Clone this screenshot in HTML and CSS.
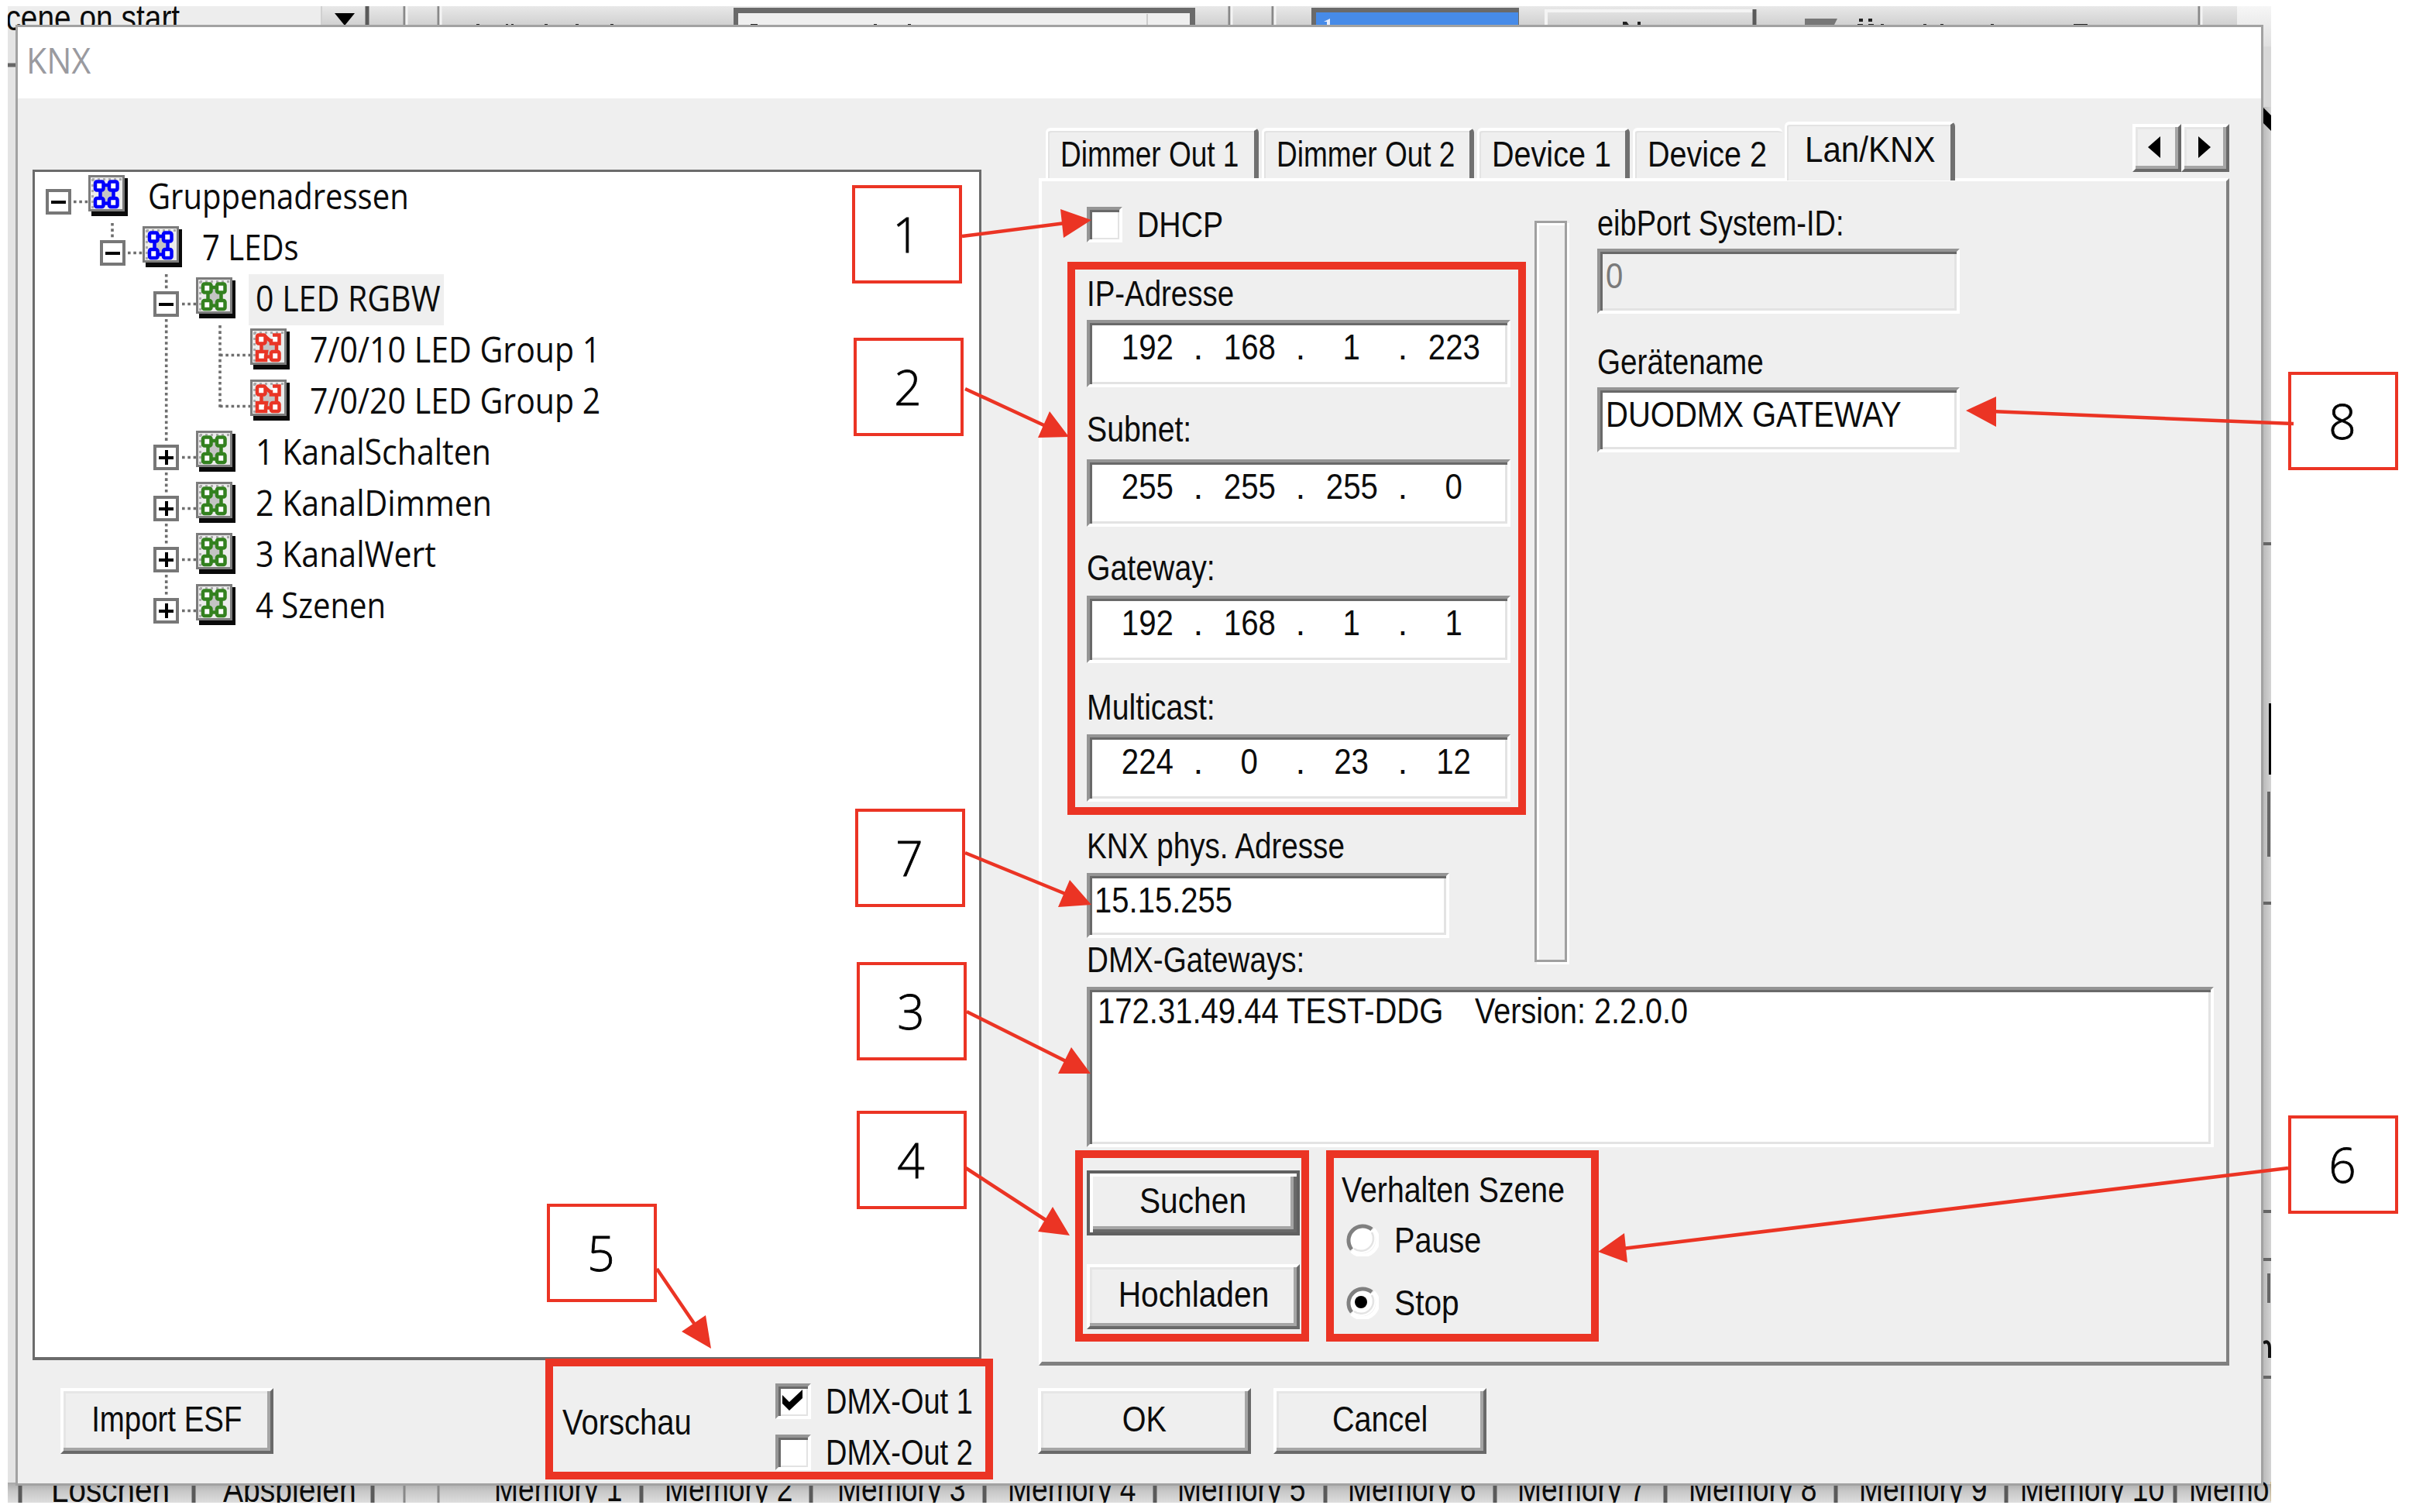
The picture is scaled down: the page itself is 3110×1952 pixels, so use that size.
FILE: index.html
```
<!DOCTYPE html>
<html lang="de">
<head>
<meta charset="utf-8">
<title>KNX</title>
<link rel="stylesheet" href="styles.css">
</head>
<body>
<main class="stage">

  <!-- Main window that shows around the edges of the dialog -->
  <svg class="backdrop" width="2922" height="1932" viewBox="10 8 2922 1932">
    <defs>
      <linearGradient id="topShade" x1="0" y1="0" x2="0" y2="1"><stop offset="0" stop-color="#e8e8e8"/><stop offset="1" stop-color="#cfcfcf"/></linearGradient>
      <linearGradient id="lowShade" x1="0" y1="0" x2="0" y2="1"><stop offset="0" stop-color="#a8a8a8"/><stop offset=".4" stop-color="#c6c6c6"/><stop offset="1" stop-color="#dedede"/></linearGradient>
      <linearGradient id="sideShade" x1="0" y1="0" x2="1" y2="0"><stop offset="0" stop-color="#b0b0b0"/><stop offset="1" stop-color="#d4d4d4"/></linearGradient>
      <linearGradient id="cornerShade" x1="0" y1="0" x2="0" y2="1"><stop offset="0" stop-color="#f6f6f6"/><stop offset="1" stop-color="#dcdcdc"/></linearGradient>
    </defs>
    <rect x="10" y="8" width="2922" height="1932" fill="#e4e4e4"/>
    <rect x="10" y="8" width="2880" height="26" fill="url(#topShade)"/>
    <rect x="10" y="8" width="405" height="26" fill="#ededed"/>
    <rect x="10" y="1914" width="2922" height="26" fill="url(#lowShade)"/>
    <rect x="2918" y="110" width="14" height="1806" fill="url(#sideShade)"/>
    <rect x="2888" y="8" width="44" height="60" fill="url(#cornerShade)"/>
    <rect x="2922" y="60" width="10" height="78" fill="#d8d8d8"/>

    <text class="ms" transform="translate(-12 39) scale(.845 1)" x="0" y="0">scene on start</text>
    <path d="M432 17h26l-13 16z" fill="#000"/>
    <path d="M415 8v26" stroke="#d0d0d0" stroke-width="2"/>
    <path d="M474 8v26" stroke="#5a5a5a" stroke-width="5"/>
    <path d="M522 8v26M566 8v26M1587 8v26M1643 8v26M2839 8v26" stroke="#888" stroke-width="3"/>
    <path d="M525 8v26M569 8v26M1590 8v26M1646 8v26M2842 8v26" stroke="#f4f4f4" stroke-width="3"/>
    <rect x="947" y="10" width="596" height="30" fill="#6a6a6a"/>
    <rect x="953" y="17" width="583" height="20" fill="#efefef"/>
    <path d="M1481 18v16" stroke="#ccc" stroke-width="2"/>
    <g fill="#222">
      <path d="M615 31h4v4h-4zM653 31h3v4h-3zM660 31h3v4h-3zM703 31h4v4h-4zM743 31h4v4h-4zM788 31h4v4h-4z"/>
      <path d="M969 31h9v4h-9zM1128 31h4v4h-4zM1172 31h4v4h-4z"/>
      <path d="M2483 31h4v4h-4zM2505 31h4v4h-4zM2570 31h4v4h-4zM2677 31h18v4h-18z"/>
      <path d="M2400 24h5v4h-5zM2412 24h5v4h-5zM2398 31h7v4h-7zM2412 31h7v4h-7zM2428 31h4v4h-4z"/>
      <path d="M2095 28h5l5 7h-10zM2114 28h4v7h-4z"/>
    </g>
    <rect x="1693" y="10" width="268" height="24" fill="#6a6a6a"/>
    <rect x="1699" y="16" width="261" height="18" fill="#478be8"/>
    <path d="M1709 28l8-4v10h-4v-6z" fill="#e8eefc"/>
    <path d="M1996 40V14h268" fill="none" stroke="#f4f4f4" stroke-width="4"/>
    <path d="M2265 12v22" stroke="#5a5a5a" stroke-width="5"/>
    <path d="M2330 24h42l-4 8h-38z" fill="#777"/>

    <g stroke="#5a5a5a" stroke-width="5">
      <path d="M26 1917v23M250 1917v23M481 1917v23M828 1917v23M1047 1917v23M1271 1917v23M1491 1917v23M1711 1917v23M1930 1917v23M2150 1917v23M2370 1917v23M2590 1917v23M2808 1917v23"/>
    </g>
    <path d="M522 1917v23M566 1917v23" stroke="#888" stroke-width="3"/>
    <g class="ms">
      <text transform="translate(66 1939) scale(.88 1)">Löschen</text>
      <text transform="translate(288 1939) scale(.85 1)">Abspielen</text>
      <text transform="translate(638 1938) scale(.81 1)">Memory 1</text>
      <text transform="translate(858 1938) scale(.81 1)">Memory 2</text>
      <text transform="translate(1081 1938) scale(.81 1)">Memory 3</text>
      <text transform="translate(1301 1938) scale(.81 1)">Memory 4</text>
      <text transform="translate(1520 1938) scale(.81 1)">Memory 5</text>
      <text transform="translate(1740 1938) scale(.81 1)">Memory 6</text>
      <text transform="translate(1959 1938) scale(.81 1)">Memory 7</text>
      <text transform="translate(2180 1938) scale(.81 1)">Memory 8</text>
      <text transform="translate(2400 1938) scale(.81 1)">Memory 9</text>
      <text transform="translate(2608 1938) scale(.81 1)">Memory 10</text>
      <text transform="translate(2826 1938) scale(.81 1)">Memory 11</text>
    </g>

    <path d="M10 84h12" stroke="#666" stroke-width="5"/>
    <path d="M2918 135l14 14v20l-14-14z" fill="#000"/>
    <path d="M2920 55v42" stroke="#666" stroke-width="4"/>
    <path d="M2931 908v92" stroke="#000" stroke-width="4"/>
    <path d="M2920 702h12M2920 1166h12M2920 1564h12M2920 1626h12M2920 1778h12" stroke="#666" stroke-width="4"/>
    <path d="M2929 1022v84M2929 1644v38" stroke="#666" stroke-width="4"/>
    <path d="M2922 1734c5-4 8 0 8 6v13" fill="none" stroke="#111" stroke-width="4"/>
  </svg>

  <section class="dialog">
    <header class="titlebar"><span class="seg seg-title">KNX</span></header>
    <div class="body">

      <div class="left">
        <div class="tree">
          <svg class="lines" width="340" height="600" viewBox="45 222 340 600">
            <g fill="none" stroke="#6e6e6e" stroke-width="3.6" stroke-dasharray="3.6 3.7">
              <path d="M95 260.5h19M165 326.5h19M235 392.5h19M284 458.500h40M284 524.500h40M235 590.500h19M235 656.500h19M235 722.500h19M235 788.500h19"/>
              <path d="M145 288v20M214.700 354v20M214.700 412v158M214.700 610v26M214.700 676v26M214.700 742v26M284 420v106"/>
            </g>
          </svg>
          <div class="row d0"><i class="box minus"></i><svg class="ico blue"><use href="#grp"/></svg><span class="name"><b class="seg">Gruppenadressen</b></span></div>
          <div class="row d1"><i class="box minus"></i><svg class="ico blue"><use href="#grp"/></svg><span class="name"><b class="seg">7 LEDs</b></span></div>
          <div class="row d2"><i class="box minus"></i><svg class="ico green"><use href="#grp"/></svg><span class="name selected"><b class="seg wide">0 LED RGBW</b></span></div>
          <div class="row d3"><i class="box none"></i><svg class="ico red"><use href="#adr"/></svg><span class="name"><b class="seg wide">7/0/10 LED Group 1</b></span></div>
          <div class="row d3"><i class="box none"></i><svg class="ico red"><use href="#adr"/></svg><span class="name"><b class="seg wide">7/0/20 LED Group 2</b></span></div>
          <div class="row d2"><i class="box plus"></i><svg class="ico green"><use href="#grp"/></svg><span class="name"><b class="seg wide">1 KanalSchalten</b></span></div>
          <div class="row d2"><i class="box plus"></i><svg class="ico green"><use href="#grp"/></svg><span class="name"><b class="seg wide">2 KanalDimmen</b></span></div>
          <div class="row d2"><i class="box plus"></i><svg class="ico green"><use href="#grp"/></svg><span class="name"><b class="seg wide">3 KanalWert</b></span></div>
          <div class="row d2"><i class="box plus"></i><svg class="ico green"><use href="#grp"/></svg><span class="name"><b class="seg">4 Szenen</b></span></div>
        </div>
        <div class="left-foot">
          <div class="btn import"><span class="t x83">Import ESF</span></div>
          <div class="preview-label"><span class="t x87">Vorschau</span></div>
          <div class="previews">
            <div class="check-row"><i class="check"><svg viewBox="0 0 38 38"><path d="M5 11l9 9 17-16v11L14 31 5 22z"/></svg></i><span class="t x82">DMX-Out 1</span></div>
            <div class="check-row"><i class="check"></i><span class="t x82">DMX-Out 2</span></div>
          </div>
        </div>
      </div>

      <div class="right">
        <div class="tabs">
          <div class="tab tab-a"><span class="t x80">Dimmer Out 1</span></div>
          <div class="tab tab-b"><span class="t x80">Dimmer Out 2</span></div>
          <div class="tab tab-c"><span class="t">Device 1</span></div>
          <div class="tab tab-d"><span class="t">Device 2</span></div>
          <div class="tab active"><span class="t x91">Lan/KNX</span></div>
          <div class="spin">
            <i class="btn arrow"><svg viewBox="0 0 16 28"><path d="M16 0v28L0 14z"/></svg></i>
            <i class="btn arrow"><svg viewBox="0 0 16 28"><path d="M0 0v28l16-14z"/></svg></i>
          </div>
        </div>
        <div class="panel">
          <div class="fields">
            <div class="net">
              <div class="check-row dhcp"><i class="check"></i><span class="t x85">DHCP</span></div>
              <div class="label l-ip"><span class="t x83">IP-Adresse</span></div>
              <div class="field ip f-ip"><b class="t">192</b><b>.</b><b class="t">168</b><b>.</b><b class="t">1</b><b>.</b><b class="t">223</b></div>
              <div class="label l-sub"><span class="t x85">Subnet:</span></div>
              <div class="field ip f-sub"><b class="t">255</b><b>.</b><b class="t">255</b><b>.</b><b class="t">255</b><b>.</b><b class="t">0</b></div>
              <div class="label l-gw"><span class="t x85">Gateway:</span></div>
              <div class="field ip f-gw"><b class="t">192</b><b>.</b><b class="t">168</b><b>.</b><b class="t">1</b><b>.</b><b class="t">1</b></div>
              <div class="label l-mc"><span class="t x85">Multicast:</span></div>
              <div class="field ip f-mc"><b class="t">224</b><b>.</b><b class="t">0</b><b>.</b><b class="t">23</b><b>.</b><b class="t">12</b></div>
              <div class="label l-knx"><span class="t x84">KNX phys. Adresse</span></div>
              <div class="field short"><span class="t x87">15.15.255</span></div>
              <div class="label l-dmx"><span class="t x84">DMX-Gateways:</span></div>
            </div>
            <div class="bar"></div>
            <div class="device">
              <div class="label"><span class="t x82">eibPort System-ID:</span></div>
              <div class="field disabled"><span class="t x87">0</span></div>
              <div class="label l-name"><span class="t x84">Gerätename</span></div>
              <div class="field"><span class="t x87">DUODMX GATEWAY</span></div>
            </div>
          </div>
          <div class="field list"><span class="t x87 gw">172.31.49.44 TEST-DDG</span><span class="t">Version: 2.2.0.0</span></div>
          <div class="actions">
            <div class="action-buttons">
              <div class="btn default"><span class="t x88">Suchen</span></div>
              <div class="btn"><span class="t x88">Hochladen</span></div>
            </div>
            <div class="scene">
              <div class="label"><span class="t x85">Verhalten Szene</span></div>
              <div class="radio-row pause"><svg class="radio" viewBox="0 0 44 44"><use href="#radio"/></svg><span class="t">Pause</span></div>
              <div class="radio-row stop"><svg class="radio" viewBox="0 0 44 44"><use href="#radio"/><circle cx="21" cy="22" r="8"/></svg><span class="t x88">Stop</span></div>
            </div>
          </div>
        </div>
        <div class="dialog-buttons">
          <div class="btn"><span class="t">OK</span></div>
          <div class="btn"><span class="t">Cancel</span></div>
        </div>
      </div>
    </div>
  </section>

  <!-- Red frames, numbered callouts and their arrows -->
  <div class="frame fr-net"></div>
  <div class="frame fr-actions"></div>
  <div class="frame fr-scene"></div>
  <div class="frame fr-preview"></div>
  <div class="callout c1">1</div>
  <div class="callout c2">2</div>
  <div class="callout c7">7</div>
  <div class="callout c3">3</div>
  <div class="callout c4">4</div>
  <div class="callout c5">5</div>
  <div class="callout c8">8</div>
  <div class="callout c6">6</div>
  <svg class="arrows" width="3110" height="1952" viewBox="0 0 3110 1952">
    <g stroke="#eb3424" stroke-width="4.500">
      <path d="M1242 305L1375 288M1246 502L1352 551M1246 1101L1378 1155M1248 1306L1378 1371M1247 1508L1353 1577M848 1638L897 1710M2961 547L2570 531M2954 1508L2095 1612"/>
    </g>
    <path fill="#eb3424" d="M1409 284L1369 270L1373 307zM1380 564L1355 531L1340 565zM1409 1168L1381 1136L1366 1171zM1408 1386L1383 1352L1366 1386zM1381 1595L1359 1558L1340 1590zM918 1741L911 1698L880 1719zM2538 530L2577 512L2577 551zM2063 1616L2097 1592L2101 1630z"/>
  </svg>

  <svg class="defs" width="0" height="0">
    <defs>
      <g id="tile">
        <path d="M4 4h47v49H4z" fill="#0a0a0a"/>
        <path d="M1.500 1.500h44v44h-44z" fill="#ececec" stroke="#7c7c7c" stroke-width="3"/>
        <path d="M5 5.500h38M5.500 5v38" stroke="#aaa" stroke-width="3" stroke-dasharray="3 4"/>
        <path d="M24 15v19M14 24.500h20" stroke="#c4c4c4" stroke-width="7"/>
      </g>
      <g id="grp">
        <use href="#tile"/>
        <g fill="#fff" stroke="currentColor" stroke-width="4.500">
          <path fill="none" d="M15.500 14v22M32.500 14v22M15 13h18M15 36.500h18"/>
          <rect x="9" y="8.500" width="10.500" height="11" rx="2"/><rect x="27" y="8.500" width="10.500" height="11" rx="2"/>
          <rect x="9" y="30" width="10.500" height="11" rx="2"/><rect x="27" y="30" width="10.500" height="11" rx="2"/>
        </g>
      </g>
      <g id="adr">
        <use href="#tile"/>
        <g fill="#fff" stroke="currentColor" stroke-width="4.500">
          <path fill="none" d="M14.500 19v11M34 19v11M19 10l8 7M19 36.500h9"/>
          <rect x="9" y="8.500" width="10.500" height="11" rx="2"/>
          <path d="M29 8.500h8.500v11H27v-6"/>
          <path d="M21 30H9v11h11v-5z"/>
          <rect x="27" y="30" width="10.500" height="11" rx="2"/>
        </g>
      </g>
      <g id="radio">
        <circle cx="22" cy="22" r="18" fill="#fff"/>
        <path d="M9 35A18.500 18.500 0 0 1 35 9" fill="none" stroke="#808080" stroke-width="5"/>
        <path d="M37 9A19 19 0 0 1 9 37" fill="none" stroke="#fff" stroke-width="5"/>
        <path d="M35 13A16 16 0 0 1 12 34" fill="none" stroke="#e3e3e3" stroke-width="2.500"/>
      </g>
    </defs>
  </svg>
</main>
</body>
</html>
```

FILE: styles.css
```
* { box-sizing: border-box; }
body { margin: 0; background: #fff; color: #0c0c0c; font: 46px/50px "Liberation Sans", Arial, sans-serif; }
b, i { font-weight: normal; font-style: normal; }
.stage { position: relative; width: 3110px; height: 1952px; overflow: hidden; background: #fff; }
.backdrop { position: absolute; left: 10px; top: 8px; }
.ms { font-size: 46px; fill: #0c0c0c; }
.defs { position: absolute; }

/* condensed interface lettering */
.t { --s: .86; display: inline-block; white-space: pre; transform: scaleX(var(--s)); transform-origin: 0 50%; }
.x80 { --s: .805; }
.x82 { --s: .825; }
.x83 { --s: .835; }
.x84 { --s: .84; }
.x85 { --s: .853; }
.x87 { --s: .87; }
.x88 { --s: .885; }
.x91 { --s: .915; }
.seg { display: inline-block; font-family: "Open Sans", "Noto Sans", sans-serif; font-size: 46px; font-weight: 400; white-space: pre; transform: scaleX(.87); transform-origin: 0 50%; }
.wide { transform: scaleX(.893); }

/* dialog window */
.dialog { position: absolute; left: 20px; top: 32px; width: 2902px; height: 1886px; border: 3px solid #a2a2a2; background: #efefef; }
.titlebar { height: 92px; padding: 17px 0 0 11px; background: #fff; }
.seg-title { color: #9a9a9f; transform: scaleX(.93); }
.body { display: flex; gap: 72px; padding-left: 19px; }
.left { flex: none; width: 1225px; padding-top: 92px; }
.right { flex: none; width: 1539px; padding-top: 30px; }

/* raised and sunken edges */
.btn { flex: none; display: flex; align-items: center; justify-content: center; width: 275px; height: 85px; padding-bottom: 6px; border: 4px solid; border-color: #fff #696969 #696969 #fff; box-shadow: inset -4px -4px #a5a5a5, inset 3px 3px #e6e6e6; background: #efefef; }
.btn .t { transform-origin: 50% 50%; }
.default { border-color: #606060; box-shadow: inset 4px 4px #fff, inset -4px -4px #696969, inset -8px -8px #a5a5a5; }
.field { border: 4px solid; border-color: #959595 #fff #fff #959595; box-shadow: inset 3px 3px #696969, inset -3px -3px #e3e3e3; background: #fff; }

/* group address tree */
.tree { position: relative; height: 1537px; border: 3px solid #6b6b6b; border-bottom-width: 4px; background: #fff; }
.lines { position: absolute; left: 0; top: 0; }
.row { position: relative; display: flex; height: 66px; }
.d0 { padding-left: 14px; }
.d1 { padding-left: 84px; }
.d2 { padding-left: 153px; }
.d3 { padding-left: 223px; }
.box { width: 33px; height: 33px; margin-top: 22px; border: 4px solid #777; background: #fff; }
.none { visibility: hidden; }
.minus, .plus { background: linear-gradient(#000, #000) center / 19px 4px no-repeat, #fff; }
.plus { background: linear-gradient(#000, #000) center / 19px 4px no-repeat, linear-gradient(#000, #000) center / 4px 19px no-repeat, #fff; }
.ico { width: 53px; height: 56px; margin: 4px 0 0 22px; }
.blue { color: #0000fb; }
.green { color: #33811f; }
.red { color: #e93526; }
.name { height: 66px; margin-left: 15px; padding-left: 9px; line-height: 61px; }
.selected { width: 252px; background: #efefef; }

.left-foot { display: flex; padding: 36px 0 0 36px; }
.preview-label { flex: none; width: 275px; margin: 19px 0 0 373px; }
.previews { flex: none; margin-top: -6px; }
.check-row { display: flex; align-items: center; height: 45px; margin-bottom: 21px; }
.check { flex: none; width: 46px; height: 46px; margin-right: 19px; border: 4px solid; border-color: #959595 #fff #fff #959595; box-shadow: inset 3px 3px #696969, inset -2px -2px #e3e3e3; background: #fff; }
.check svg { display: block; width: 38px; height: 38px; }

/* tabs */
.tabs { display: flex; align-items: flex-end; height: 76px; padding-left: 11px; }
.tab { flex: none; height: 65px; margin: 0 4px 3px 0; padding: 5px 0 0 16px; border: solid; border-width: 4px 6px 0 3px; border-color: #fff #707070 #fff #fff; border-radius: 6px 6px 0 0; box-shadow: inset 2px 2px #e3e3e3; }
.tab-a { width: 275px; }
.tab-b { width: 274px; }
.tab-c { width: 197px; }
.tab-d { width: 193px; margin-right: 0; border-right: 0; }
.tab .t { width: 0; }
.active { position: relative; z-index: 1; width: 220px; height: 76px; margin: 0 0 0 3px; padding: 7px 0 0 23px; background: #efefef; border-right-color: #707070; }
.spin { display: flex; margin: 0 0 11px 229px; }
.arrow { width: 63px; height: 62px; padding-bottom: 2px; }
.arrow + .arrow { width: 62px; }
.arrow svg { width: 16px; height: 28px; margin-left: -8px; }
.arrow + .arrow svg { margin-left: -2px; }

.panel { height: 1533px; margin: -3px 0 0 2px; padding: 33px 0 0 58px; border: solid; border-width: 4px 4px 5px 4px; border-color: #fff #808080 #808080 #fff; }
.fields { display: flex; align-items: flex-start; }
.net { width: 547px; }
.label { height: 50px; white-space: nowrap; }
.l-ip { margin-top: 42px; }
.f-ip { margin-top: 9px; }
.l-sub { margin-top: 29px; }
.f-sub { margin-top: 14px; }
.l-gw { margin-top: 28px; }
.f-gw { margin-top: 11px; }
.l-mc { margin-top: 32px; }
.f-mc { margin-top: 10px; }
.l-knx { margin-top: 32px; }
.l-dmx { margin-top: 3px; }
.dhcp { margin-bottom: 0; }
.ip { display: grid; grid-template-columns: repeat(7, 66px); height: 87px; padding: 6px 0 0 41px; text-align: center; }
.ip .t { justify-self: center; transform-origin: 50% 50%; --s: .875; }
.short { width: 468px; height: 84px; margin-top: 10px; padding: 6px 0 0 6px; }
.bar { width: 42px; height: 957px; margin: 18px 39px 0 31px; border: 3px solid #a0a0a0; box-shadow: inset 3px 3px #fff, 3px 3px #fff; }
.device { width: 468px; margin-top: -4px; }
.device .field { height: 84px; margin-top: 8px; padding: 6px 0 0 7px; }
.disabled { background: #efefef; color: #7a7a7a; }
.device .l-name { margin-top: 37px; }
.list { display: flex; width: 1455px; height: 207px; margin-top: 10px; padding: 2px 0 0 10px; }
.gw { width: 487px; }
.actions { display: flex; margin-top: 30px; }
.action-buttons { display: flex; flex-direction: column; gap: 37px; }
.action-buttons .btn { height: 84px; }
.scene { margin-left: 54px; }
.radio-row { display: flex; align-items: center; height: 50px; }
.radio { width: 44px; height: 44px; margin: -3px 20px 0 4px; }
.pause { margin-top: 15px; }
.stop { margin-top: 31px; }
.dialog-buttons { display: flex; gap: 29px; margin: 29px 0 0 1px; }

/* markup over the dialog */
.frame { position: absolute; border: 10px solid #eb3424; }
.fr-net { left: 1378px; top: 338px; width: 592px; height: 714px; }
.fr-actions { left: 1388px; top: 1485px; width: 302px; height: 247px; }
.fr-scene { left: 1712px; top: 1485px; width: 352px; height: 247px; }
.fr-preview { left: 704px; top: 1754px; width: 578px; height: 156px; }
.callout { position: absolute; width: 142px; height: 127px; border: 4px solid #eb3424; background: #fff; color: #000; font: 300 62px/119px "Open Sans", "Noto Sans", sans-serif; -webkit-text-stroke: .8px #000; text-align: center; padding-right: 2px; }
.c1 { left: 1100px; top: 239px; }
.c2 { left: 1102px; top: 436px; }
.c7 { left: 1104px; top: 1044px; }
.c3 { left: 1106px; top: 1242px; }
.c4 { left: 1106px; top: 1434px; }
.c5 { left: 706px; top: 1554px; }
.c8 { left: 2954px; top: 480px; }
.c6 { left: 2954px; top: 1440px; }
.arrows { position: absolute; left: 0; top: 0; }
```
